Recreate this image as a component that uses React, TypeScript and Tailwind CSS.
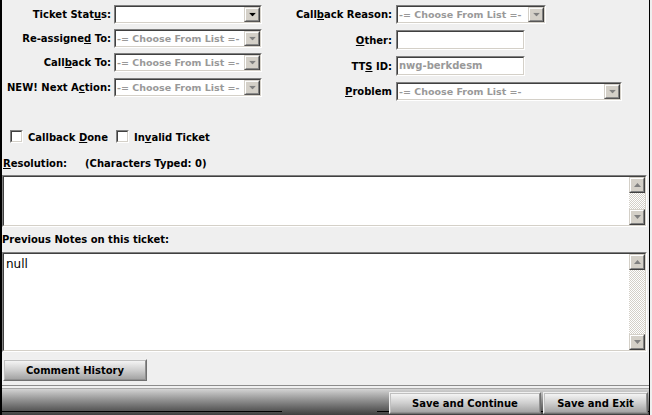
import React from "react";

const font = "font-['DejaVu_Sans',Tahoma,sans-serif]";

function Arrow({ dir = "down", color = "#000000" }: { dir?: "up" | "down"; color?: string }) {
  return (
    <svg width="7" height="4" viewBox="0 0 7 4">
      {dir === "down" ? <path d="M0 0h7L3.5 4z" fill={color} /> : <path d="M0 4h7L3.5 0z" fill={color} />}
    </svg>
  );
}

function ArrowButton({ dir = "down", disabled = false }: { dir?: "up" | "down"; disabled?: boolean }) {
  return (
    <div className="w-[16px] h-[16px] shrink-0 border border-t-[#d4d0c8] border-l-[#d4d0c8] border-b-[#404040] border-r-[#404040]">
      <div className="w-full h-full flex items-center justify-center bg-[#d4d0c8] border border-t-white border-l-white border-b-[#808080] border-r-[#808080]">
        <Arrow dir={dir} color={disabled ? "#808080" : "#000000"} />
      </div>
    </div>
  );
}

function Inset({ className = "", children }: { className?: string; children?: React.ReactNode }) {
  return (
    <div className={`border border-t-[#808080] border-l-[#808080] border-b-white border-r-white ${className}`}>
      <div className="w-full h-full bg-white border border-t-[#404040] border-l-[#404040] border-b-[#d4d0c8] border-r-[#d4d0c8] flex">
        {children}
      </div>
    </div>
  );
}

function Select({ width, disabled = false, text = "" }: { width: string; disabled?: boolean; text?: string }) {
  return (
    <Inset className={`${width} h-[19px]`}>
      <div className="flex-1 pl-[1px] text-[9.5px] text-[#999999] leading-[15px] whitespace-nowrap overflow-hidden">{text}</div>
      <div className="h-[15px] flex items-start">
        <div className="scale-y-[0.9375] origin-top">
          <ArrowButton disabled={disabled} />
        </div>
      </div>
    </Inset>
  );
}

function Label({ children, width = "w-[109px]" }: { children: React.ReactNode; width?: string }) {
  return <div className={`${width} shrink-0 text-right whitespace-nowrap`}>{children}</div>;
}

function Scrollbar() {
  return (
    <div className="w-[16px] h-full flex flex-col bg-[image:repeating-conic-gradient(#d4d0c8_0_25%,#ffffff_0_50%)] bg-[length:2px_2px]">
      <ArrowButton dir="up" disabled />
      <div className="flex-1" />
      <ArrowButton dir="down" disabled />
    </div>
  );
}

function TextArea({ height, children }: { height: string; children?: React.ReactNode }) {
  return (
    <Inset className={`w-[645px] ${height}`}>
      <div className="flex-1 pl-[2px] pt-[3px] font-normal text-[12px] leading-[14px] font-['DejaVu_Sans',sans-serif]">{children}</div>
      <Scrollbar />
    </Inset>
  );
}

function Checkbox() {
  return (
    <div className="w-[13px] h-[13px] border border-t-[#808080] border-l-[#808080] border-b-white border-r-white">
      <div className="w-full h-full bg-white border border-t-[#404040] border-l-[#404040] border-b-[#d4d0c8] border-r-[#d4d0c8]" />
    </div>
  );
}

function Btn({ width, children }: { width: string; children: React.ReactNode }) {
  return (
    <div className={`${width} h-[22px] border border-t-[#f0f0f0] border-l-[#f0f0f0] border-b-[#707070] border-r-[#707070]`}>
      <div className="w-full h-full flex items-center justify-center bg-gradient-to-b from-[#f4f4f4] via-[#cfcfcf] to-[#a4a4a4] border border-t-[#c0c0c0] border-l-[#c0c0c0] border-b-[#909090] border-r-[#909090]">
        {children}
      </div>
    </div>
  );
}

export default function App() {
  return (
    <div className={`w-[652px] h-[415px] bg-[#efefef] text-black text-[10px] font-bold ${font} overflow-hidden`}>
      <div className="w-[650px] h-[415px] border-l-2 border-r border-black flex flex-col">
        {/* TOP FIELDS */}
        <div className="flex pt-[5px] gap-[21px]">
          <div className="flex flex-col gap-[5px]">
            <div className="flex items-center gap-[3px] h-[19px]">
              <Label>Ticket Stat<u>u</u>s:</Label>
              <Select width="w-[148px]" />
            </div>
            <div className="flex items-center gap-[3px] h-[19px]">
              <Label>Re-assigne<u>d</u> To:</Label>
              <Select width="w-[148px]" disabled text="-= Choose From List =-" />
            </div>
            <div className="flex items-center gap-[3px] h-[19px]">
              <Label>Call<u>b</u>ack To:</Label>
              <Select width="w-[148px]" disabled text="-= Choose From List =-" />
            </div>
            <div className="flex items-center gap-[3px] h-[19px] mt-[1px]">
              <Label>NEW! Next A<u>c</u>tion:</Label>
              <Select width="w-[148px]" disabled text="-= Choose From List =-" />
            </div>
          </div>

          <div className="flex flex-col gap-[6px]">
            <div className="flex items-center gap-[4px] h-[19px]">
              <Label>Call<u>b</u>ack Reason:</Label>
              <Select width="w-[150px]" disabled text="-= Choose From List =-" />
            </div>
            <div className="flex items-center gap-[4px] h-[20px]">
              <Label><u>O</u>ther:</Label>
              <Inset className="w-[129px] h-[20px]" />
            </div>
            <div className="flex items-center gap-[4px] h-[20px]">
              <Label>TT<u>S</u> ID:</Label>
              <Inset className="w-[129px] h-[20px]">
                <div className="pl-[1px] text-[#999999] leading-[16px]">nwg-berkdesm</div>
              </Inset>
            </div>
            <div className="flex items-center gap-[4px] h-[19px]">
              <Label><u>P</u>roblem</Label>
              <Select width="w-[226px]" disabled text="-= Choose From List =-" />
            </div>
          </div>
        </div>

        {/* CHECKBOXES */}
        <div className="flex items-center h-[13px] mt-[29px] pl-[8px]">
          <Checkbox />
          <span className="ml-[5px] pt-[1px]">Callback <u>D</u>one</span>
          <div className="ml-[8px]">
            <Checkbox />
          </div>
          <span className="ml-[5px] pt-[1px]">In<u>v</u>alid Ticket</span>
        </div>

        {/* RESOLUTION */}
        <div className="flex h-[14px] leading-[14px] mt-[14px] pl-[1px]">
          <span className="w-[82px]"><u>R</u>esolution:</span>
          <span>(Characters Typed: 0)</span>
        </div>
        <div className="mt-[4px]">
          <TextArea height="h-[52px]" />
        </div>

        <div className="h-[14px] leading-[14px] mt-[6px]">Previous Notes on this ticket:</div>
        <div className="mt-[5px]">
          <TextArea height="h-[100px]">null</TextArea>
        </div>

        {/* COMMENT HISTORY */}
        <div className="mt-[7px] pl-[1px]">
          <Btn width="w-[144px] h-[20px]">Comment History</Btn>
        </div>

        {/* BOTTOM BAR */}
        <div className="mt-[4px] flex-1 flex flex-col">
          <div className="h-[1px] bg-[#8c8c8c]" />
          <div className="h-[2px] bg-[#f0f0f0]" />
          <div className="h-[1px] bg-[#a8a8a8]" />
          <div className="relative flex-1 bg-gradient-to-b from-[#d4d4d4] to-[#404040] flex justify-end items-start pt-[3px] pr-[1px] gap-[2px]">
            <div className="absolute left-0 w-[280px] bottom-[3px] h-[1px] bg-black" />
            <div className="absolute left-[375px] right-0 bottom-[3px] h-[1px] bg-black" />
            <div className="relative">
              <Btn width="w-[152px]">Save and Continue</Btn>
            </div>
            <div className="relative">
              <Btn width="w-[105px]">Save and Exit</Btn>
            </div>
          </div>
        </div>
      </div>
    </div>
  );
}
